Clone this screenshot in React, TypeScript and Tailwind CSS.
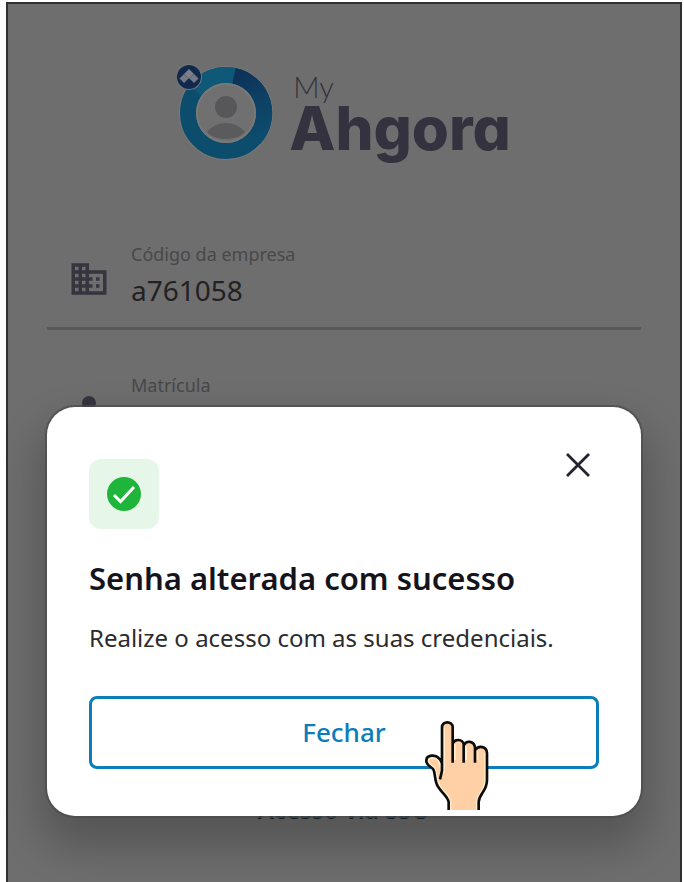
import { useState } from "react";

const FONT = "font-['Noto_Sans','Open_Sans',sans-serif]";

function AhgoraLogo() {
  return (
    <div className="flex items-start gap-4">
      <svg viewBox="0 0 96 96" className="w-24 h-24 shrink-0" aria-hidden="true">
        <defs>
          <linearGradient id="ring-fade" gradientUnits="userSpaceOnUse" x1="62" y1="12" x2="84" y2="72">
            <stop offset="0" stopColor="#0d3358" />
            <stop offset="0.4" stopColor="#0e3f63" />
            <stop offset="1" stopColor="#0c4c6c" />
          </linearGradient>
        </defs>
        <circle cx="49" cy="49" r="47" fill="#7a7a7a" />
        <circle cx="49" cy="49" r="38" fill="none" stroke="#0c4c6c" strokeWidth="16" />
        <path d="M18 27A38 38 0 0 1 57 11.800" fill="none" stroke="#0f5877" strokeWidth="16" />
        <path d="M57 11.800A38 38 0 0 1 77 75" fill="none" stroke="url(#ring-fade)" strokeWidth="16" />
        <circle cx="49" cy="49" r="30" fill="#787878" />
        <circle cx="49" cy="49" r="28" fill="#707070" />
        <circle cx="49" cy="43" r="11" fill="#575759" />
        <path d="M30 68C35 62 42 59 49 59C56 59 63 62 68 68C63 73 57 75 49 75C41 75 35 73 30 68Z" fill="#5b5b5d" />
        <circle cx="12" cy="13" r="13" fill="#777" />
        <circle cx="12" cy="13" r="12" fill="#11294d" />
        <path d="M12 5L17 10L12 15L7 10Z" fill="#7b7f88" />
        <path d="M7 10L11.500 14.500L7 19L2.500 14.500Z" fill="#757983" />
        <path d="M17 10L21.500 14.500L17 19L12.500 14.500Z" fill="#757983" />
      </svg>
      <div className="flex flex-col text-[#353240]">
        <span className="pt-[7px] pl-1 font-['Lato',sans-serif] font-light text-[29px] leading-8">My</span>
        <span className="font-['Inter',sans-serif] font-extrabold text-[60px] leading-[50px] [font-feature-settings:'cv11']">
          Ahgora
        </span>
      </div>
    </div>
  );
}

function BuildingIcon() {
  return (
    <svg viewBox="0 0 24 24" className="w-[42px] h-[42px]" fill="#36343f" aria-hidden="true">
      <path d="M12 7V3H2v18h20V7H12zM6 19H4v-2h2v2zm0-4H4v-2h2v2zm0-4H4V9h2v2zm0-4H4V5h2v2zm4 12H8v-2h2v2zm0-4H8v-2h2v2zm0-4H8V9h2v2zm0-4H8V5h2v2zm10 12h-8v-2h2v-2h-2v-2h2v-2h-2V9h8v10zm-2-8h-2v2h2v-2zm0 4h-2v2h2v-2z" />
    </svg>
  );
}

function PersonIcon() {
  return (
    <svg viewBox="0 0 24 24" className="w-[42px] h-[42px]" fill="#36343f" aria-hidden="true">
      <circle cx="12" cy="8" r="4" />
      <path d="M12 14c-2.67 0-8 1.34-8 4v2h16v-2c0-2.66-5.33-4-8-4z" />
    </svg>
  );
}

interface FieldProps {
  id: string;
  label: string;
  icon: React.ReactNode;
  defaultValue?: string;
}

function Field({ id, label, icon, defaultValue }: FieldProps) {
  return (
    <div className="flex items-start gap-[21px] pl-[21px] pb-[13px] border-b-3 border-[#585858]">
      <div className="pt-4">{icon}</div>
      <div className="flex flex-col flex-1 min-w-0">
        <label htmlFor={id} className="text-[18px] leading-6 text-[#48484a]">{label}</label>
        <input
          id={id}
          defaultValue={defaultValue}
          className="w-full h-12 bg-transparent text-[28px] text-[#222224] outline-none"
        />
      </div>
    </div>
  );
}

// Pointing hand that sits over the dialog's button
function HandPointer() {
  return (
    <svg
      viewBox="75 60 192 270"
      className="absolute right-[152px] bottom-[6px] w-16 h-[90px] pointer-events-none"
      aria-hidden="true"
    >
      <path
        d="M146 334V306C142 286 120 276 110 252C103 236 106 216 99 207C91 199 78 196 79 181C80 164 106 163 116 174C122 179 123 182 126 190V82C126 62 158 62 158 82V126C165 116 187 117 191 132C199 120 222 122 225 142C236 135 261 139 261 160V240C261 274 238 280 236 306V334Z"
        fill="#ffd0a6"
      />
      <path
        d="M151 334V304C146 282 124 274 115 249C109 232 111 214 103 204C97 197 84 193 84 182C86 170 106 169 113 179C119 186 120 192 121 202M132 218V84M164 180V132M198 180V138M232 180V154M256 160V240C256 270 233 280 231 304V334"
        fill="none"
        stroke="#ffeccb"
        strokeWidth="6"
      />
      <path
        d="M146 334V306C142 286 120 276 110 252C103 236 106 216 99 207C91 199 78 196 79 181C80 164 106 163 116 174C122 179 123 182 126 190V82C126 62 158 62 158 82V188M158 130C165 116 187 117 191 132V188M191 136C199 120 222 122 225 142V188M225 150C236 135 261 139 261 160V240C261 274 238 280 236 306V334M126 188V212L120 238"
        fill="none"
        stroke="#0c0c0c"
        strokeWidth="8"
        strokeLinejoin="round"
      />
    </svg>
  );
}

function SuccessDialog({ onClose }: { onClose: () => void }) {
  return (
    <div className="absolute inset-0 flex items-end px-[39px] pb-[66px]">
      <div
        role="dialog"
        aria-labelledby="dialog-title"
        className="relative w-full rounded-[28px] bg-white px-[42px] pt-[52px] pb-[47px] ring-2 ring-[#4b4b4b]/70 shadow-[0_24px_40px_8px_rgba(0,0,0,0.22)]"
      >
        <div className="flex items-start justify-between">
          <div className="flex items-center justify-center w-[70px] h-[70px] rounded-xl bg-[#e6f7ea]">
            <svg viewBox="0 0 36 36" className="w-9 h-9" aria-hidden="true">
              <circle cx="18" cy="18" r="17" fill="#1fb53a" />
              <path d="M8 19L14.500 25.500L28 11" fill="none" stroke="#fff" strokeWidth="3" />
            </svg>
          </div>
          <button type="button" aria-label="Fechar janela" onClick={onClose} className="-mt-[15px] p-2 cursor-pointer">
            <svg viewBox="0 0 26 26" className="w-[26px] h-[26px]" aria-hidden="true">
              <path d="M2 2L24 24M24 2L2 24" fill="none" stroke="#24222f" strokeWidth="2.800" />
            </svg>
          </button>
        </div>

        <h1 id="dialog-title" className="mt-[31px] text-[31px] leading-9 font-semibold text-[#15131c]">
          Senha alterada com sucesso
        </h1>
        <p className="mt-6 text-[24px] leading-9 text-[#2b2b30]">
          Realize o acesso com as suas credenciais.
        </p>
        <button
          type="button"
          onClick={onClose}
          className="mt-10 w-full h-[73px] rounded-lg border-3 border-[#0b7dba] text-[26px] font-medium text-[#0b7dba] cursor-pointer"
        >
          Fechar
        </button>
        <HandPointer />
      </div>
    </div>
  );
}

export default function App() {
  const [open, setOpen] = useState(true);

  return (
    <div className={`flex h-screen overflow-hidden bg-white pt-[2px] pl-[6px] pr-[2px] ${FONT}`}>
      <main className="relative flex flex-1 flex-col px-[39px] border-2 border-b-0 border-[#2f2f2f] bg-[#6e6e6e]">
        <div className="flex justify-center pt-[60px] pb-[82px]">
          <AhgoraLogo />
        </div>
        <form className="flex flex-col gap-[43px]">
          <Field id="company" label="Código da empresa" icon={<BuildingIcon />} defaultValue="a761058" />
          <Field id="registration" label="Matrícula" icon={<PersonIcon />} />
        </form>
        <a href="#sso" className="mt-auto mb-14 self-center text-[24px] leading-8 font-semibold text-[#122a38]">
          Acesso via SSO
        </a>
        {open && <SuccessDialog onClose={() => setOpen(false)} />}
      </main>
    </div>
  );
}
